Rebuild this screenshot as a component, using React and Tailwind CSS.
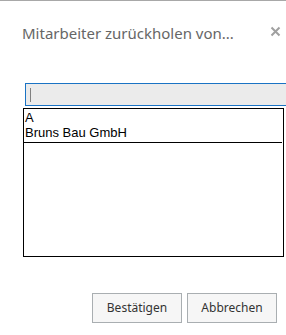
import React from 'react';

const App = () => {
    return (
        <div className="w-[286px] h-[335px] bg-white border-t border-[#a8a8a8] overflow-hidden flex flex-col">
            {/* Header */}
            <div className="flex items-start justify-between pl-[22px] pr-[5px] pt-[22px] h-[82px]">
                <h1 className="text-[15px] leading-[20px] text-[#666666] font-['Noto_Sans',sans-serif] font-normal">
                    Mitarbeiter zurückholen von...
                </h1>
                <button className="w-[11px] h-[11px] mt-[3px] text-[#a0a0a0]">
                    <svg viewBox="0 0 11 11" className="w-[11px] h-[11px]">
                        <path d="M1.5 1.5 L9.5 9.5 M9.5 1.5 L1.5 9.5" stroke="#a0a0a0" strokeWidth="2" fill="none" />
                    </svg>
                </button>
            </div>

            {/* Search field */}
            <div className="ml-[25px] w-[270px] h-[23px] bg-[#ebebeb] border border-[#1a73c4] flex items-center pl-[4px]">
                <div className="w-px h-[14px] bg-[#808080]" />
            </div>

            {/* List */}
            <div className="mt-[2px] ml-[23px] w-[261px] h-[149px] border border-black font-['Liberation_Sans',Arial,sans-serif] text-[13px] leading-[15px] text-black">
                <div className="pl-px pt-px mr-px border-b border-black pb-[2px]">
                    <div>A</div>
                    <div>Bruns Bau GmbH</div>
                </div>
            </div>

            {/* Footer */}
            <div className="flex justify-end gap-[5px] pr-[9px] mt-[36px] font-['Noto_Sans',sans-serif] text-[12px] text-[#333333]">
                <button className="w-[90px] h-[30px] bg-[#f6f6f6] border border-[#a9aeb1]">Bestätigen</button>
                <button className="w-[90px] h-[30px] bg-[#f6f6f6] border border-[#a9aeb1]">Abbrechen</button>
            </div>
        </div>
    );
};

export default App;
